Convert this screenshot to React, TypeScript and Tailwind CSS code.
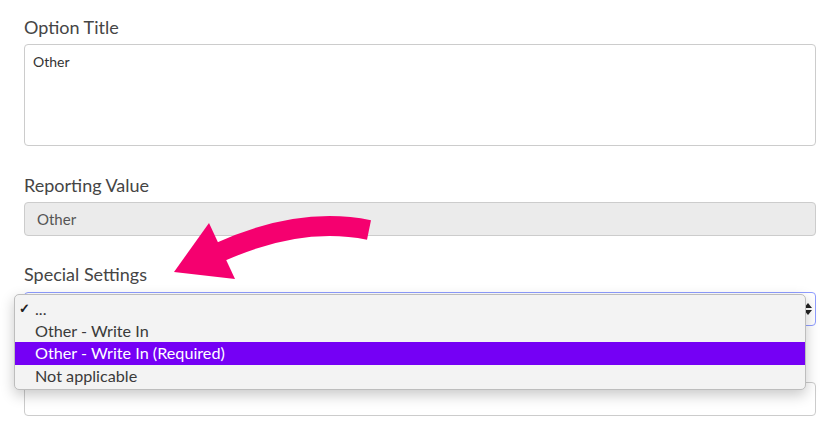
import React from "react";

const font = { fontFamily: "Lato, 'Open Sans', sans-serif" };

export default function App() {
  return (
    <div className="w-[839px] h-[442px] bg-white overflow-hidden relative" style={font}>
      <div className="flex flex-col pl-[24px] pr-[23px] pt-[16px]">
        <label className="text-[18px] leading-[22px] text-[#454545]">Option Title</label>
        <div className="mt-[6px] h-[102px] border border-[#cccccc] rounded-[4px] px-[8px] pt-[9px] text-[14px] leading-[16px] text-[#333]">
          Other
        </div>

        <label className="mt-[28px] text-[18px] leading-[22px] text-[#454545]">Reporting Value</label>
        <div className="mt-[6px] h-[34px] border border-[#cccccc] rounded-[4px] bg-[#ebebeb] px-[12px] flex items-center text-[15px] text-[#555]">
          Other
        </div>

        <label className="mt-[27px] text-[18px] leading-[22px] text-[#454545]">Special Settings</label>
        <div className="mt-[7px] relative">
          <div className="h-[34px] border border-[#8f9dff] rounded-[4px] bg-white flex items-center justify-end pr-[2px]">
            <svg width="10" height="14" viewBox="0 0 10 14">
              <path d="M5 1 L9 6 L1 6 Z" fill="#222" />
              <path d="M5 13 L9 8 L1 8 Z" fill="#222" />
            </svg>
          </div>

          <div className="mt-[28px] h-[22px]" />
          <div className="mt-[6px] h-[34px] border border-[#cccccc] rounded-[4px] bg-white" />

          <div className="absolute left-[-10px] top-[2px] w-[792px] h-[96px] bg-[#f3f3f3] border border-[#bdbdbd] rounded-[5px] shadow-[0_5px_14px_rgba(0,0,0,0.22)] py-[3px] text-[16.2px] text-[#3a3a3a] flex flex-col">
            <div className="h-[22px] flex items-center relative pl-[20px]">
              <span className="absolute left-[4px] text-[13px] font-bold text-[#222]">✓</span>
              <span>...</span>
            </div>
            <div className="h-[22px] flex items-center pl-[20px]">Other - Write In</div>
            <div className="h-[23px] flex items-center pl-[20px] bg-[#7500f5] text-white">Other - Write In (Required)</div>
            <div className="h-[22px] flex items-center pl-[20px]">Not applicable</div>
          </div>
        </div>
      </div>

      <svg className="absolute left-0 top-0 pointer-events-none" width="839" height="442" viewBox="0 0 839 442">
        <path d="M369 230 Q 300 216 220 252" stroke="#f5006f" strokeWidth="20" fill="none" />
        <path d="M209 223 L174 272 L235 279 Z" fill="#f5006f" />
      </svg>
    </div>
  );
}
